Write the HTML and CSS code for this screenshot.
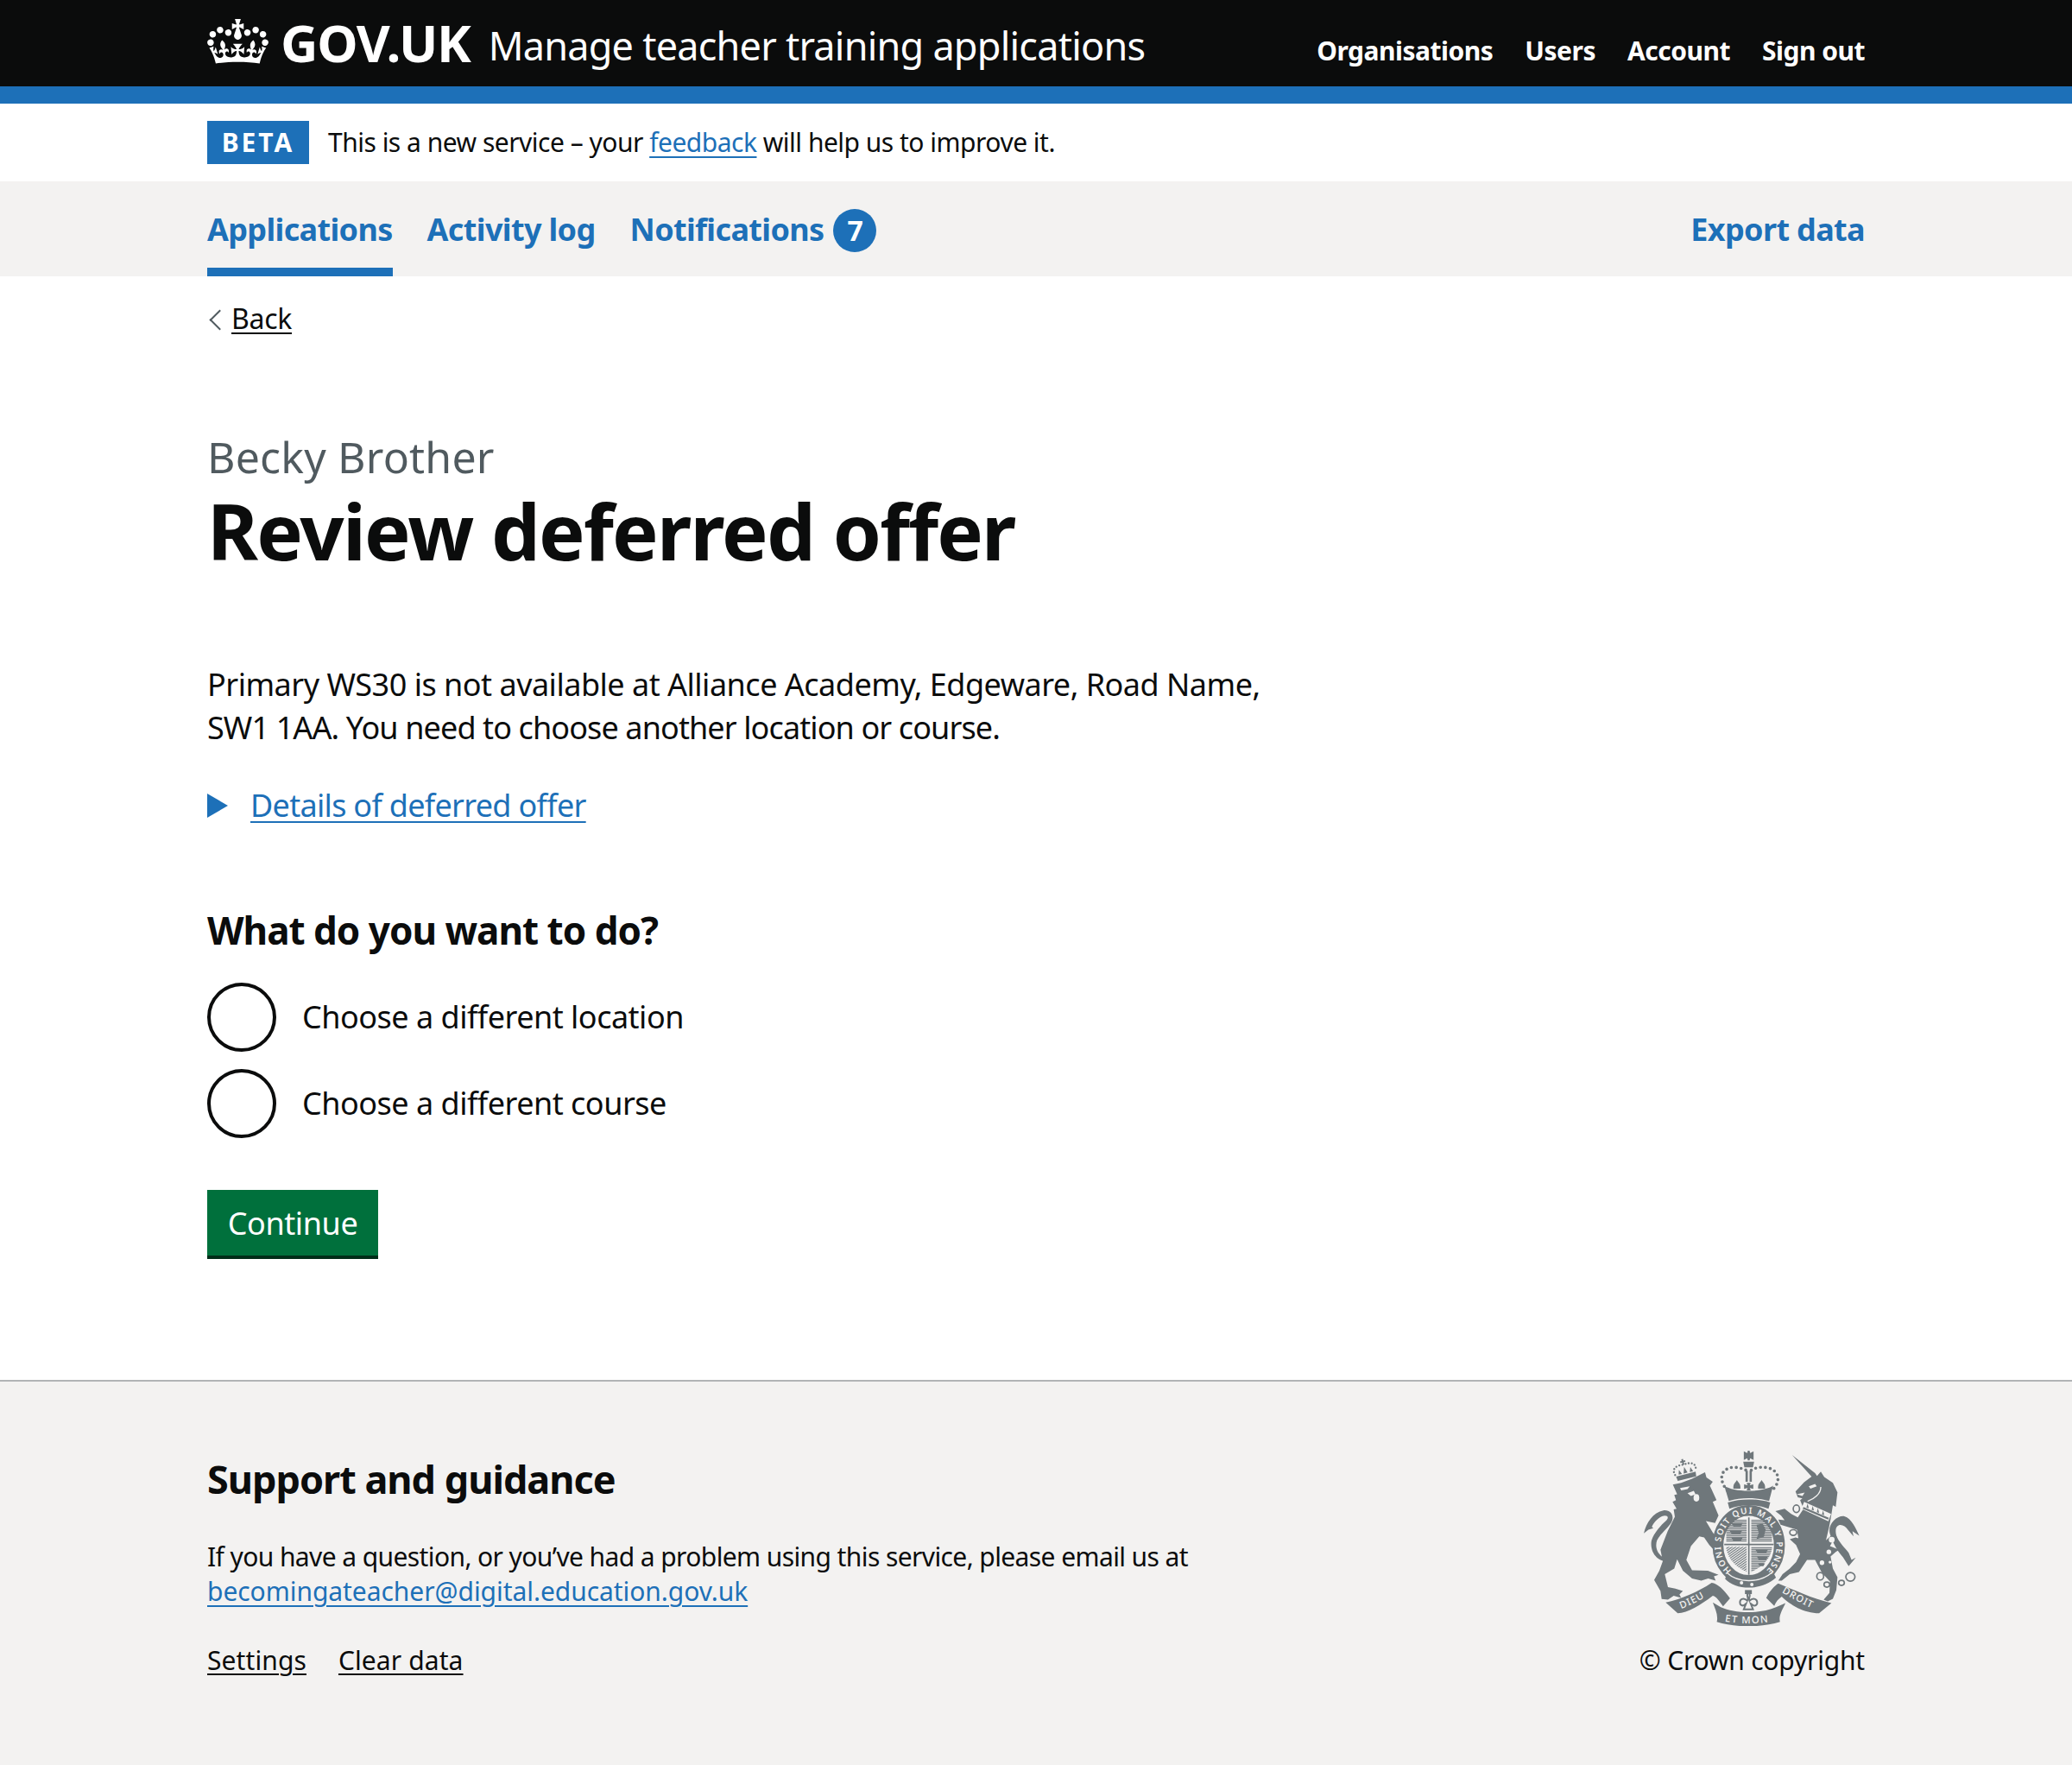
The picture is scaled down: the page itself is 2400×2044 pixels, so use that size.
FILE: index.html
```html
<!DOCTYPE html>
<html lang="en">
<head>
    <meta charset="UTF-8">
    <title>Review deferred offer - Manage teacher training applications - GOV.UK</title>
    <link rel="stylesheet" href="styles.css">
</head>
<body>
    <header class="header">
        <div class="wrap header-row">
            <a class="logo" href="#">
                <svg class="crown" viewBox="0 0 132 97" width="71" height="52">
                    <path fill="currentColor" fill-rule="evenodd" d="M25 30.2c3.5 1.5 7.7-.2 9.1-3.7 1.5-3.6-.2-7.8-3.9-9.2-3.6-1.4-7.6.3-9.1 3.9-1.4 3.5.3 7.5 3.9 9zM9 39.5c3.6 1.5 7.8-.2 9.2-3.7 1.5-3.6-.2-7.8-3.9-9.1-3.6-1.5-7.6.2-9.1 3.8-1.4 3.5.3 7.5 3.8 9zM4.4 57.2c3.5 1.5 7.7-.2 9.1-3.8 1.5-3.6-.2-7.7-3.9-9.1-3.5-1.5-7.6.3-9.1 3.8-1.4 3.5.3 7.6 3.9 9.1zm38.3-21.4c3.5 1.5 7.7-.2 9.1-3.8 1.5-3.6-.2-7.7-3.9-9.1-3.6-1.5-7.6.3-9.1 3.8-1.3 3.6.4 7.7 3.9 9.1zm64.4-5.6c-3.6 1.5-7.8-.2-9.1-3.7-1.5-3.6.2-7.8 3.8-9.2 3.6-1.4 7.7.3 9.2 3.9 1.3 3.5-.4 7.5-3.9 9zm15.9 9.3c-3.6 1.5-7.7-.2-9.1-3.7-1.5-3.6.2-7.8 3.7-9.1 3.6-1.5 7.7.2 9.2 3.8 1.5 3.5-.3 7.5-3.8 9zm4.7 17.7c-3.6 1.5-7.8-.2-9.2-3.8-1.5-3.6.2-7.7 3.9-9.1 3.6-1.5 7.7.3 9.2 3.8 1.3 3.5-.4 7.6-3.9 9.1zM89.3 35.8c-3.6 1.5-7.8-.2-9.2-3.8-1.4-3.6.2-7.7 3.9-9.1 3.6-1.5 7.7.3 9.2 3.8 1.4 3.6-.3 7.7-3.9 9.1zM69.7 17.7l8.9 4.7V9.3l-8.9 2.8c-.2-.3-.5-.6-.9-.9L72.4 0H59.6l3.5 11.2c-.3.3-.6.5-.9.9l-8.8-2.8v13.1l8.8-4.7c.3.3.6.7.9.9l-5 15.4v.1c-.2.8-.4 1.6-.4 2.4 0 4.1 3.1 7.5 7 8.1h.2c.3 0 .7.1 1 .1.4 0 .7 0 1-.1h.2c4-.6 7.1-4.1 7.1-8.1 0-.8-.1-1.7-.4-2.4V34l-5.1-15.4c.4-.2.7-.6 1-.9zM66 92.8c16.9 0 32.8 1.1 47.1 3.2 4-16.9 8.9-26.7 14-33.5l-9.6-3.4c1 4.9 1.1 7.2 0 10.2-1.5-1.4-3-4.3-4.2-8.7L108.6 76c2.8-2 5-3.2 7.5-3.3-4.4 9.4-10 11.9-13.6 11.2-4.3-.8-6.3-4.6-5.6-7.9 1-4.7 5.7-5.9 8-.5 4.3-8.7-3-11.4-7.6-8.8 7.1-7.2 7.9-13.5 2.1-21.1-8 6.1-8.1 12.3-4.5 20.8-4.7-5.4-12.1-2.5-9.5 6.2 3.4-5.2 7.9-2 7.2 3.1-.6 4.3-6.4 7.8-13.5 7.2-10.3-.9-10.9-8-11.2-13.8 2.5-.5 7.1 1.8 11 7.3L80.2 60c-4.1 4.4-8 5.3-12.3 5.4 1.4-4.4 8-11.6 8-11.6H55.5s6.4 7.2 7.9 11.6c-4.2-.1-8-1-12.3-5.4l1.4 16.4c3.9-5.5 8.5-7.7 10.9-7.3-.3 5.8-.9 12.8-11.1 13.8-7.2.6-12.9-2.9-13.5-7.2-.7-5 3.8-8.3 7.1-3.1 2.7-8.7-4.6-11.6-9.4-6.2 3.7-8.5 3.6-14.7-4.6-20.8-5.8 7.6-5 13.9 2.2 21.1-4.7-2.6-11.9.1-7.7 8.8 2.3-5.5 7.1-4.2 8.1.5.7 3.3-1.3 7.1-5.7 7.9-3.5.7-9-1.8-13.5-11.2 2.5.1 4.7 1.3 7.5 3.3l-4.7-15.4c-1.2 4.4-2.7 7.2-4.3 8.7-1.1-3-.9-5.3 0-10.2l-9.5 3.4c5 6.9 9.9 16.7 14 33.5 14.8-2.1 30.8-3.2 47.7-3.2z"></path>
                </svg>
                <span class="logotype">GOV.UK</span>
            </a>
            <a class="service-name" href="#">Manage teacher training applications</a>
            <nav class="header-nav">
                <a href="#">Organisations</a>
                <a href="#">Users</a>
                <a href="#">Account</a>
                <a href="#">Sign out</a>
            </nav>
        </div>
    </header>

    <div class="wrap phase">
        <strong class="tag">BETA</strong>
        <span>This is a new service &ndash; your <a class="link" href="#">feedback</a> will help us to improve it.</span>
    </div>

    <nav class="tabs">
        <div class="wrap tabs-row">
            <a class="tab tab-current" href="#">Applications</a>
            <a class="tab" href="#">Activity log</a>
            <a class="tab" href="#">Notifications <span class="badge">7</span></a>
            <a class="tab tab-right" href="#">Export data</a>
        </div>
    </nav>

    <div class="wrap">
        <a class="back" href="#">Back</a>

        <main>
            <span class="caption">Becky Brother</span>
            <h1 class="title">Review deferred offer</h1>

            <p class="body">Primary WS30 is not available at Alliance Academy, Edgeware, Road Name, <span class="body-end">SW1 1AA. You need to choose another location or course.</span></p>

            <div class="details"><a class="link" href="#">Details of deferred offer</a></div>

            <h2 class="question">What do you want to do?</h2>

            <div class="radios">
                <label class="radio"><span class="radio-mark"></span>Choose a different location</label>
                <label class="radio"><span class="radio-mark"></span>Choose a different course</label>
            </div>

            <button class="button">Continue</button>
        </main>
    </div>

    <footer class="footer">
        <div class="wrap footer-row">
            <div class="footer-main">
                <h2 class="footer-title">Support and guidance</h2>
                <p class="footer-text">If you have a question, or you&rsquo;ve had a problem using this service, please email us at <a class="link footer-email" href="#">becomingateacher@digital.education.gov.uk</a></p>
                <div class="footer-links">
                    <a href="#">Settings</a>
                    <a href="#">Clear data</a>
                </div>
            </div>
            <div class="footer-side">
                <svg class="crest" viewBox="130 60 755 610" width="252" height="203">
                    <defs>
                        <pattern id="hatch" width="6" height="6" patternUnits="userSpaceOnUse">
                            <rect width="6" height="3.6" fill="#6f777b"/>
                        </pattern>
                        <pattern id="slant" width="7" height="7" patternUnits="userSpaceOnUse" patternTransform="rotate(55)">
                            <rect width="3.4" height="7" fill="#6f777b"/>
                        </pattern>
                        <path id="garter-arc" d="M437 477 A97 111 0 1 1 557 477"/>
                        <path id="dieu-arc" d="M262 610 C295 598 335 578 372 552"/>
                        <path id="mon-arc" d="M414 654 Q495 668 584 654"/>
                        <path id="droit-arc" d="M612 553 C650 575 695 600 738 618"/>
                    </defs>

                    <!-- lion -->
                    <g fill="#6f777b">
                        <path d="M233 178 L262 172 L300 158 L345 135 L350 153 L372 168 L362 182 L385 232 L372 238 L392 285 L380 312 L348 305 L372 345 L392 370 L404 405 L405 422 L382 412 L360 388 L342 362 L325 358 L296 392 L280 440 L300 476 L355 478 L392 492 L376 497 L382 512 L356 505 L332 512 L300 505 L268 478 L248 438 L238 470 L205 490 L216 535 L242 540 L268 548 L256 560 L262 572 L236 565 L216 578 L194 576 L190 548 L168 510 L186 478 L198 445 L190 405 L215 340 L240 290 L236 264 L246 262 L232 238 L244 232 L238 214 L248 212 Z"/>
                        <path d="M132 348 C140 310 165 275 200 268 C225 265 238 285 230 305 C222 325 192 345 178 372 C170 395 178 420 205 435 L215 445 C175 445 155 410 158 378 C160 358 185 325 208 305 C222 292 215 282 195 288 C180 296 165 310 160 325 L165 330 L148 335 Z"/>
                    </g>
                    <g fill="#f3f2f1">
                        <path d="M258 190 L292 184 L284 194 L262 198 Z"/>
                        <path d="M284 208 L306 200 L312 212 L296 218 Z"/>
                        <ellipse cx="315" cy="224" rx="10" ry="13"/>
                    </g>
                    <!-- lion crown -->
                    <g transform="rotate(-14 275 128)">
                        <path d="M240 142 L310 142 L308 158 L242 158 Z" fill="#6f777b"/>
                        <path d="M250 138 L255 122 L262 138 Z M268 138 L275 116 L282 138 Z M290 138 L296 122 L302 138 Z" fill="#6f777b"/>
                        <path d="M238 136 C230 112 250 104 275 108 C300 104 320 112 312 136" fill="none" stroke="#6f777b" stroke-width="7" stroke-linecap="round" stroke-dasharray="0 11"/>
                        <path d="M272 88 h6 v6 h6 v6 h-6 v8 h-6 v-8 h-6 v-6 h6 Z" fill="#6f777b"/>
                    </g>

                    <!-- unicorn -->
                    <g fill="#6f777b">
                        <path d="M648 75 L728 138 L735 148 L748 133 L760 152 L790 172 L806 205 L800 255 L790 250 L782 300 L776 330 L766 372 L790 350 L796 362 L780 392 L812 405 L800 412 L782 428 L790 470 L806 500 L802 545 L790 575 L772 584 L758 578 L778 555 L780 515 L752 485 L728 440 L700 440 L672 482 L640 490 L612 512 L600 512 L615 490 L640 470 L662 448 L676 420 L662 388 L640 368 L660 362 L670 365 L665 335 L608 318 L600 300 L622 302 L610 286 L590 270 L622 262 L645 280 L668 292 L688 262 L676 232 L684 226 L668 222 L660 202 L690 170 L716 150 Z"/>
                        <path d="M780 350 C770 320 800 285 830 288 C855 295 870 330 882 356 L858 340 L862 358 L842 335 C830 315 800 310 800 340 C800 370 830 395 845 415 L855 440 L870 432 L845 462 L825 430 C805 410 790 380 780 350 Z"/>
                    </g>
                    <path d="M664 212 L692 206 L684 218" fill="#f3f2f1"/>
                    <path d="M748 186 C748 210 725 228 702 236" fill="none" stroke="#f3f2f1" stroke-width="4"/>
                    <path d="M706 184 L728 176 L734 184 L712 192 Z" fill="#f3f2f1"/>
                    <path d="M690 238 L784 280 L774 306 L680 262 Z" fill="#f3f2f1"/>
                    <path d="M688 256 L776 294 L773 300 L685 262 Z" fill="#6f777b"/>
                    <path d="M698 258 l4 -14 l4 16 Z M716 266 l4 -14 l4 16 Z M734 274 l4 -14 l4 16 Z M752 282 l4 -14 l4 16 Z" fill="#6f777b"/>
                    <g fill="#f3f2f1">
                        <circle cx="786" cy="370" r="10"/>
                        <circle cx="776" cy="412" r="8"/>
                        <circle cx="752" cy="450" r="8"/>
                        <circle cx="780" cy="448" r="5"/>
                    </g>
                    <g fill="none" stroke="#6f777b" stroke-width="5">
                        <ellipse cx="663" cy="262" rx="11" ry="13"/>
                        <ellipse cx="652" cy="345" rx="12" ry="10"/>
                        <ellipse cx="746" cy="497" rx="12" ry="13"/>
                        <ellipse cx="769" cy="526" rx="10" ry="9"/>
                        <ellipse cx="820" cy="520" rx="10" ry="9"/>
                        <ellipse cx="851" cy="499" rx="16" ry="15"/>
                    </g>

                    <!-- royal crown -->
                    <g fill="#6f777b">
                        <path d="M480 62 L492 68 L494 60 H500 L502 68 L514 62 V92 L502 86 L500 94 H494 L492 86 L480 92 Z"/>
                        <path d="M478 98 h38 l-4 20 h-30 Z"/>
                        <path d="M486 130 h8 v38 h-8 Z M500 130 h8 v38 h-8 Z"/>
                        <path d="M412 182 C445 206 545 206 582 182 L568 235 C520 222 472 222 428 235 Z"/>
                        <path d="M456 162 C462 172 470 176 468 192 L444 192 C442 176 450 172 456 162 Z"/>
                        <path d="M542 162 C548 172 556 176 554 192 L530 192 C528 176 536 172 542 162 Z"/>
                        <path d="M490 172 h14 l-3 8 l12 -3 v16 l-12 -3 l3 8 h-14 l3 -8 l-12 3 v-16 l12 3 Z"/>
                        <path d="M424 240 C470 226 525 226 572 240 L566 262 C525 246 470 246 430 262 Z"/>
                    </g>
                    <path d="M422 198 C394 165 395 125 440 118 C462 117 480 124 488 128 M506 128 C520 118 545 115 565 120 C605 130 610 170 578 198" fill="none" stroke="#6f777b" stroke-width="11" stroke-linecap="round" stroke-dasharray="0 17"/>

                    <!-- shield and garter -->
                    <path d="M412 298 H584 V400 C584 450 540 480 498 500 C455 480 412 450 412 400 Z" fill="#f3f2f1"/>
                    <path d="M419 300 H490 V378 H419 Z" fill="url(#hatch)"/>
                    <path d="M506 300 H578 V378 H506 Z" fill="url(#hatch)"/>
                    <path d="M419 394 H490 V482 C455 465 425 440 419 400 Z" fill="url(#slant)"/>
                    <path d="M506 394 H578 V400 C572 440 540 465 506 482 Z" fill="url(#hatch)"/>
                    <g fill="#6f777b">
                        <path d="M436 312 h40 l-6 12 h-26 Z M430 338 h44 l-6 12 h-30 Z M436 362 h40 l-6 12 h-26 Z"/>
                        <path d="M524 318 l22 -4 l10 20 l-6 26 l-26 8 l8 -22 Z"/>
                        <path d="M520 404 h44 l-6 12 h-30 Z M526 428 h38 l-6 12 h-26 Z M530 452 h24 l-6 10 h-14 Z"/>
                        <path d="M495 292 h5 v200 h-5 Z M412 384 h172 v5 h-172 Z"/>
                    </g>
                    <ellipse cx="497" cy="390" rx="107" ry="122" fill="none" stroke="#6f777b" stroke-width="38"/>
                    <path d="M420 490 C460 530 530 530 585 488 L592 502 C540 550 450 545 415 506 Z" fill="#6f777b"/>
                    <path d="M420 484 C460 522 535 522 580 482" fill="none" stroke="#f3f2f1" stroke-width="4"/>
                    <text class="crest-text crest-garter"><textPath href="#garter-arc" textLength="520">HONI SOIT QUI MAL Y PENSE</textPath></text>
                    <circle cx="472" cy="520" r="6" fill="#f3f2f1"/>
                    <circle cx="508" cy="526" r="6" fill="#f3f2f1"/>

                    <!-- motto scroll -->
                    <g fill="#6f777b">
                        <path d="M208 588 C260 578 320 552 368 520 C388 522 412 545 432 574 L408 602 C396 585 385 568 372 565 C330 597 285 625 250 626 Z"/>
                        <path d="M372 588 L400 605 C450 628 540 628 592 605 L625 590 C616 612 600 632 606 656 C540 676 450 676 386 656 C392 632 380 610 372 588 Z"/>
                        <path d="M558 572 C572 545 588 530 600 522 C650 542 720 576 785 590 L742 626 C690 626 640 596 612 568 C600 576 592 586 586 600 Z"/>
                        <path d="M484 545 h24 v14 h-24 Z"/>
                    </g>
                    <path d="M496 552 C485 565 500 570 492 582 C480 570 462 575 468 595 C478 605 484 595 488 592 L480 612 L512 612 L504 592 C510 596 518 605 526 594 C530 575 512 570 500 582 C494 570 508 565 496 552 Z" fill="#f3f2f1" stroke="#6f777b" stroke-width="6"/>
                    <text class="crest-text"><textPath href="#dieu-arc">DIEU</textPath></text>
                    <text class="crest-text crest-mon"><textPath href="#mon-arc">ET MON</textPath></text>
                    <text class="crest-text"><textPath href="#droit-arc">DROIT</textPath></text>
                </svg>
                <a class="copyright" href="#">&copy; Crown copyright</a>
            </div>
        </div>
    </footer>
</body>
</html>
```

FILE: styles.css
```css
* {
    box-sizing: border-box;
}

body {
    margin: 0;
    font-family: "Noto Sans", Arial, sans-serif;
    font-size: 36px;
    letter-spacing: -0.5px;
    line-height: 50px;
    color: #0b0c0c;
    background-color: white;
}

a {
    color: inherit;
}

.wrap {
    width: 1920px;
    margin: 0 auto;
}

.link {
    color: #1d70b8;
    text-decoration-thickness: 2px;
    text-underline-offset: 5px;
}

/* header */

.header {
    height: 120px;
    color: white;
    background-color: #0b0c0c;
    border-bottom: 20px solid #1d70b8;
}

.header a {
    color: white;
    text-decoration: none;
}

.header-row {
    display: flex;
    align-items: flex-start;
    height: 100px;
}

.logo {
    display: flex;
    align-items: flex-start;
    padding-top: 22px;
}

.logotype {
    margin: -12px 0 0 14px;
    font-size: 60px;
    font-weight: 700;
    line-height: 78px;
    letter-spacing: -1.25px;
}

.service-name {
    margin-left: 21px;
    padding-top: 23px;
    font-size: 45px;
    letter-spacing: -0.77px;
    line-height: 60px;
}

.header-nav {
    display: flex;
    gap: 37px;
    margin-left: auto;
    padding-top: 39px;
    font-size: 30px;
    font-weight: 700;
    letter-spacing: -0.5px;
    line-height: 40px;
}

/* phase banner */

.phase {
    display: flex;
    align-items: center;
    gap: 22px;
    height: 90px;
    font-size: 30px;
}

.tag {
    width: 118px;
    height: 50px;
    font-size: 30px;
    letter-spacing: 3px;
    line-height: 50px;
    text-align: center;
    color: white;
    background-color: #1d70b8;
}

/* tabs */

.tabs {
    background-color: #f3f2f1;
}

.tabs-row {
    display: flex;
    gap: 40px;
}

.tab {
    display: flex;
    gap: 11px;
    height: 110px;
    padding-top: 36px;
    font-size: 36px;
    font-weight: 700;
    letter-spacing: -0.65px;
    line-height: 40px;
    color: #1d70b8;
    text-decoration: none;
}

.tab-current {
    border-bottom: 10px solid #1d70b8;
}

.tab-right {
    margin-left: auto;
}

.badge {
    width: 50px;
    height: 50px;
    margin-top: -4px;
    font-size: 32px;
    line-height: 50px;
    text-align: center;
    color: white;
    background-color: #1d70b8;
    border-radius: 50%;
}

/* back link */

.back {
    display: block;
    position: relative;
    width: fit-content;
    margin-top: 29px;
    padding-left: 28px;
    font-size: 32px;
    letter-spacing: -0.3px;
    line-height: 40px;
    text-decoration-thickness: 2px;
    text-underline-offset: 4px;
}

.back::before {
    content: "";
    position: absolute;
    left: 6px;
    top: 13px;
    width: 15px;
    height: 15px;
    border-left: 2px solid #505a5f;
    border-bottom: 2px solid #505a5f;
    transform: rotate(45deg);
}

/* main */

.caption {
    display: block;
    margin-top: 110px;
    font-size: 50px;
    letter-spacing: 0.2px;
    line-height: 60px;
    color: #505a5f;
}

.title {
    margin: 5px 0 0;
    font-size: 90px;
    font-weight: 700;
    letter-spacing: -1.8px;
    line-height: 100px;
}

.body {
    width: 1260px;
    margin: 104px 0 0;
}

.body-end {
    letter-spacing: -0.89px;
}

.details {
    position: relative;
    margin-top: 40px;
    padding-left: 50px;
    letter-spacing: -0.7px;
}

.details::before {
    content: "";
    position: absolute;
    left: 0;
    top: 11px;
    border-style: solid;
    border-width: 14px 0 14px 24px;
    border-color: transparent transparent transparent #1d70b8;
}

.question {
    margin: 94px 0 0;
    font-size: 44px;
    font-weight: 700;
    letter-spacing: -1px;
    line-height: 50px;
}

.radios {
    display: flex;
    flex-direction: column;
    gap: 20px;
    margin-top: 36px;
}

.radio {
    display: flex;
    align-items: center;
    gap: 30px;
    height: 80px;
}

.radio-mark {
    width: 80px;
    height: 80px;
    border: 4px solid #0b0c0c;
    border-radius: 50%;
}

.button {
    display: block;
    width: 198px;
    height: 80px;
    margin: 60px 0 140px;
    padding: 0 0 4px;
    font-family: inherit;
    font-size: 36px;
    letter-spacing: -0.4px;
    color: white;
    background-color: #00703c;
    border: 0;
    box-shadow: inset 0 -4px 0 #002d18;
}

/* footer */

.footer {
    height: 446px;
    background-color: #f3f2f1;
    border-top: 2px solid #b1b4b6;
}

.footer-row {
    display: flex;
    justify-content: space-between;
}

.footer-main {
    padding-top: 88px;
}

.footer-title {
    margin: 0;
    font-size: 45px;
    font-weight: 700;
    letter-spacing: -1px;
    line-height: 50px;
}

.footer-text {
    width: 1240px;
    margin: 45px 0 0;
    font-size: 30px;
    letter-spacing: -0.6px;
    line-height: 40px;
}

.footer-email {
    letter-spacing: -0.05px;
}

.footer-links {
    display: flex;
    gap: 37px;
    margin-top: 40px;
    font-size: 30px;
    letter-spacing: 0.1px;
    line-height: 40px;
}

.footer-links a,
.copyright {
    text-decoration-thickness: 2px;
    text-underline-offset: 4px;
}

.footer-side {
    display: flex;
    flex-direction: column;
    align-items: center;
    padding-top: 80px;
}

.crest {
    display: block;
    margin-bottom: 20px;
}

.crest-text {
    font-size: 34px;
    font-weight: 500;
    letter-spacing: 3px;
    fill: #f3f2f1;
}

.crest-garter {
    font-size: 30px;
    letter-spacing: 0;
    font-weight: 600;
}

.crest-mon {
    letter-spacing: 4px;
}

.copyright {
    font-size: 30px;
    letter-spacing: -0.2px;
    line-height: 40px;
    text-decoration: none;
}
```
